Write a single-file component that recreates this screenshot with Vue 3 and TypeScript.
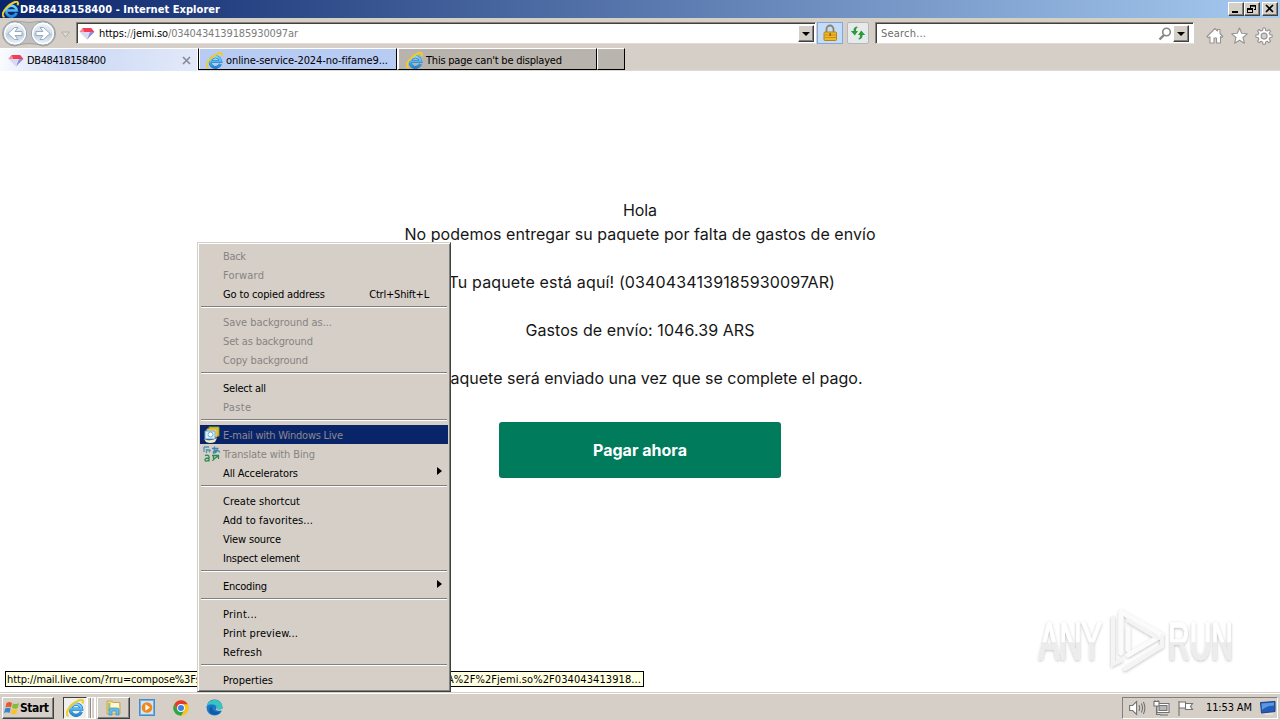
<script setup lang="ts">
interface MenuItem {
  label: string
  w: number
  off?: boolean
  active?: boolean
  sub?: boolean
  key?: string
  icon?: string
}

const groups: MenuItem[][] = [
  [
    { label: 'Back', w: 23, off: true },
    { label: 'Forward', w: 41, off: true },
    { label: 'Go to copied address', w: 102, key: 'Ctrl+Shift+L' },
  ],
  [
    { label: 'Save background as...', w: 109, off: true },
    { label: 'Set as background', w: 90, off: true },
    { label: 'Copy background', w: 85, off: true },
  ],
  [
    { label: 'Select all', w: 43 },
    { label: 'Paste', w: 28, off: true },
  ],
  [
    { label: 'E-mail with Windows Live', w: 120, off: true, active: true, icon: 'mail' },
    { label: 'Translate with Bing', w: 92, off: true, icon: 'bing' },
    { label: 'All Accelerators', w: 75, sub: true },
  ],
  [
    { label: 'Create shortcut', w: 77 },
    { label: 'Add to favorites...', w: 90 },
    { label: 'View source', w: 58 },
    { label: 'Inspect element', w: 77 },
  ],
  [{ label: 'Encoding', w: 44, sub: true }],
  [
    { label: 'Print...', w: 34 },
    { label: 'Print preview...', w: 75 },
    { label: 'Refresh', w: 39 },
  ],
  [{ label: 'Properties', w: 50 }],
]

/* Tracks an element's text so that it fills the given width. */
const vFit = {
  mounted(el: HTMLElement, binding: { value: number }) {
    const n = (el.textContent || '').length
    if (n < 2) return
    const natural = el.getBoundingClientRect().width
    el.style.letterSpacing = `${(binding.value - natural) / (n - 1)}px`
  },
}
</script>

<template>
  <div class="screen">
    <svg class="defs" width="0" height="0">
      <defs>
        <linearGradient id="ieBlue" x1="0" y1="0" x2="0" y2="1">
          <stop offset="0" stop-color="#7ad8fc" /><stop offset="1" stop-color="#2389d8" />
        </linearGradient>
        <linearGradient id="ball" x1="0" y1="0" x2="0" y2="1">
          <stop offset="0" stop-color="#f3f6f9" /><stop offset=".48" stop-color="#d3dde7" />
          <stop offset=".52" stop-color="#b9cbdc" /><stop offset="1" stop-color="#f2f9fd" />
        </linearGradient>
        <symbol id="ie" viewBox="0 0 16 16">
          <path d="M13.600 11.300A5 5 0 1 1 13.900 9H5" fill="none" stroke="#1c78c6" stroke-width="2.900" />
          <path d="M13.600 11.300A5 5 0 1 1 13.900 9H5" fill="none" stroke="url(#ieBlue)" stroke-width="1.900" />
          <path d="M2.500 14.900C-.9 14.800.9 9.500 4.500 6 8.500 2 14.500-.9 15 1.800q.2 1-.5 2.200" fill="none" stroke="#f0cc2e" stroke-width="1.900" />
        </symbol>
        <symbol id="gem" viewBox="0 0 16 14">
          <path d="M3.500 1h9L16 5.500H0z" fill="#ee3f56" /><path d="M3.500 1 5 5.500H0z" fill="#f78995" />
          <path d="M0 5.500h16L8 13.500z" fill="#d4d9f5" /><path d="M11 5.500h5l-8 8z" fill="#8b90dc" /><path d="M5 5.500h6l-3 8z" fill="#e0d8f0" />
        </symbol>
      </defs>
    </svg>

    <header class="title">
      <svg class="t-ico" width="17" height="17"><use href="#ie" /></svg>
      <b v-fit="200">DB48418158400 - Internet Explorer</b>
      <div class="wbtns">
        <i><svg width="12" height="10"><path d="M2 8h6" stroke="#000" stroke-width="2" /></svg></i>
        <i><svg width="12" height="10"><path d="M4 1.500h6M4.500 1v3M9.500 1v5M8 5.500h2M1 4.500h6M1.500 4v5M6.500 4v5M1 8.500h6M1 5.500h6M4 2.200h6" stroke="#000" fill="none" /></svg></i>
        <i class="gap"><svg width="12" height="10"><path d="m2 1 7 7M9 1 2 8" stroke="#000" stroke-width="1.700" /></svg></i>
      </div>
    </header>

    <nav class="bar">
      <svg class="navs" width="76" height="30">
        <path d="M15 3Q29 6 43 3a12.500 12.500 0 0 1 0 25Q29 23 15 28a12.500 12.500 0 0 1 0-25z" fill="#c2c0be" stroke="#a3a09d" />
        <g v-for="x in [15, 43]" :key="x">
          <circle :cx="x" cy="15.500" r="11.500" fill="url(#ball)" stroke="#8d9aa8" />
          <circle :cx="x" cy="15.500" r="10.300" fill="none" stroke="#fbfdff" stroke-width="1.500" />
        </g>
        <path d="M22 13.500h-7l3-4h-3.500l-6.500 6 6.500 6H18l-3-4h7z" fill="#fff" stroke="#8fa4ba" stroke-width=".9" />
        <path d="M36 13.500h7l-3-4h3.500l6.500 6-6.500 6H40l3-4h-7z" fill="#fff" stroke="#8fa4ba" stroke-width=".9" />
        <path d="M61.500 14h8l-4 5z" fill="#dedad4" stroke="#b3afa8" />
      </svg>
      <div class="field addr">
        <svg class="a-ico" width="16" height="13"><use href="#gem" /></svg>
        <span v-fit="199" class="url">https:<em>//</em>jemi.so<em>/0340434139185930097ar</em></span>
        <i class="drop"></i>
      </div>
      <div class="lock">
        <svg width="18" height="18"><path d="M5.500 9V5a3.500 3.500 0 0 1 7 0v4" fill="none" stroke="#8c826c" stroke-width="1.800" /><rect x="3" y="8" width="12.500" height="8.500" rx="1" fill="#f0b822" stroke="#b58318" /><path d="M3.500 11h12M3.500 13.500h12" stroke="#c98f16" /><path d="M9.200 9v3" stroke="#8f6410" stroke-width="1.500" /></svg>
      </div>
      <div class="reload">
        <svg width="18" height="18"><path d="M7.500 2.500C5 3 4.500 5 4.500 7H1.800l4 4.500L9 7H7c0-2 .2-3 2-4z" fill="#2b9b3c" /><path d="M10.500 15.500c2.500-.5 3-2.500 3-4.500h2.700l-4-4.500L9 11h2c0 2-.2 3-2 4z" fill="#2b9b3c" /></svg>
      </div>
      <div class="field search">
        <span v-fit="45" class="ph">Search...</span>
        <svg class="mag" width="14" height="14"><circle cx="8.500" cy="5" r="3.800" fill="none" stroke="#858585" stroke-width="1.600" /><path d="m6 8-4.500 4.500" stroke="#858585" stroke-width="2.400" /></svg>
        <i class="drop"></i>
      </div>
      <svg class="tools" width="72" height="20">
        <g fill="#fff" stroke="#949494" stroke-width="1.100" stroke-linejoin="round">
          <path d="M1 10.500 9 2.500l2.500 2.500V3.500H14v4l2.800 3-1.300 1-1-.8V17h-4v-5H8v5H4v-6.300l-1.700 1z" />
          <path d="m33.500 2 2.200 5.300 5.600.5-4.300 3.700 1.400 5.700-4.900-3-4.900 3 1.400-5.700-4.300-3.700 5.600-.5z" />
          <path d="m57 2h2.200l.4 2.300 1.500.7 1.900-1.400 1.600 1.600L63.200 7l.7 1.600 2.200.4v2.200l-2.200.4-.7 1.600 1.400 1.900-1.600 1.600-1.900-1.400-1.500.7-.4 2.300H57l-.4-2.300-1.600-.7-1.900 1.400-1.500-1.600 1.300-1.900-.7-1.600-2.300-.4V9l2.300-.4.7-1.600-1.300-1.900 1.500-1.600L55 5l1.600-.7z" />
          <circle cx="58.100" cy="10.100" r="3" fill="#d5cfc8" />
        </g>
      </svg>
    </nav>

    <div class="tabs">
      <div class="tab on">
        <svg width="16" height="13"><use href="#gem" /></svg><span v-fit="79">DB48418158400</span>
        <svg class="x" width="9" height="9"><path d="m1 1 7 7M8 1 1 8" stroke="#8a8b9a" stroke-width="1.700" /></svg>
      </div>
      <div class="tab blue"><svg width="17" height="17"><use href="#ie" /></svg><span v-fit="162">online-service-2024-no-fifame9...</span></div>
      <div class="tab grey"><svg width="17" height="17"><use href="#ie" /></svg><span v-fit="136">This page can't be displayed</span></div>
      <div class="tab new"></div>
    </div>

    <main class="page">
      <p><span v-fit="34">Hola</span></p>
      <p><span v-fit="471">No podemos entregar su paquete por falta de gastos de envío</span></p>
      <p class="sp"><span v-fit="390">¡Tu paquete está aquí! (0340434139185930097AR)</span></p>
      <p class="sp"><span v-fit="229">Gastos de envío: 1046.39 ARS</span></p>
      <p class="sp"><span v-fit="445">Tu paquete será enviado una vez que se complete el pago.</span></p>
      <button><span v-fit="94">Pagar ahora</span></button>
    </main>

    <svg class="mark" width="230" height="80" viewBox="0 0 230 80">
      <defs>
        <filter id="soft" x="-10%" y="-10%" width="120%" height="130%"><feDropShadow dx="0" dy="1" stdDeviation="1.500" flood-color="#000" flood-opacity=".27" /></filter>
        <linearGradient id="fade" x1="0" y1="0" x2="0" y2="1"><stop offset=".5" stop-color="#fff" /><stop offset=".52" stop-color="#ececec" /><stop offset="1" stop-color="#ededed" /></linearGradient>
      </defs>
      <g filter="url(#soft)">
        <g fill="url(#fade)" font-family="'Liberation Sans Narrow', 'Liberation Sans', sans-serif" font-weight="400" font-size="51" stroke="url(#fade)" stroke-width="1.300">
          <text x="9" y="59" textLength="63" lengthAdjust="spacingAndGlyphs">ANY</text>
          <text x="138" y="59" textLength="65" lengthAdjust="spacingAndGlyphs">RUN</text>
        </g>
        <path d="M91 53V12l41 23-34 20M98 28v22" fill="none" stroke="#fbfbfb" stroke-width="4.500" stroke-linejoin="round" stroke-linecap="round" />
        <path d="M83 18v46l8-4M95 69l37-23V36M98 20l30 18" fill="none" stroke="#f4f4f4" stroke-width="4" stroke-linecap="round" />
      </g>
    </svg>

    <div class="status">
      <span v-fit="194">http://mail.live.com/?rru=compose%3Fs</span>
      <span v-fit="194">A%2F%2Fjemi.so%2F034043413918...</span>
    </div>

    <div class="menu">
      <div v-for="(g, i) in groups" :key="i" class="group">
        <div v-for="m in g" :key="m.label" class="item" :class="{ off: m.off, active: m.active }">
          <span class="ic">
            <svg v-if="m.icon === 'mail'" width="18" height="18"><path d="M6 1h10v9H6z" fill="#f2c63a" stroke="#6ba52f" /><path d="M4 3h10v8H4z" fill="#f8db72" stroke="#dba52b" /><path d="M2 5h10v8H2z" fill="#d9f0fd" stroke="#69a6ce" /><circle cx="7.500" cy="8.500" r="2.500" fill="#fff" stroke="#63a9d8" /><path d="M1 13q6 3 13-1l-2 4q-5 2-9 0z" fill="#efe9bd" /></svg>
            <svg v-if="m.icon === 'bing'" width="18" height="18" fill="none" stroke-width="1.300">
              <path d="M1 2v5M1 2h5M3.500 4v4M3.500 5H7M6 7l1.500-2" stroke="#4a94b8" />
              <path d="M9 3.500h6.500M11.500 1.500q-.5 4 .8 6.500M14.500 4.500q-1 3.500-4 3.500-1-2 2.500-2.500 3.500-.3 3.500 2" stroke="#3d86b0" />
              <path d="M2 10.500q4-1 4 1.500v4.500M6 13q-4-.2-4 2t4 .2" stroke="#2b8a4e" />
              <path d="M9 10.500h3M10.500 10.500v5M9 15.500l6-4.500M12 10.500h3.500V14" stroke="#2b8a4e" />
            </svg>
          </span>
          <span v-fit="m.w" class="lb">{{ m.label }}</span>
          <span v-if="m.key" v-fit="60" class="lb key">{{ m.key }}</span>
          <i v-if="m.sub" class="arr"></i>
        </div>
      </div>
    </div>

    <footer class="task">
      <div class="start">
        <svg width="16" height="16"><path d="M2.500 3q3-2 5.500 0L7 7.500q-2.500-1.500-5.500 0z" fill="#e8592b" /><path d="M9 3.400q3 1.500 6-.4L13.800 8q-3 1.500-5.800-.2z" fill="#86bd35" /><path d="M1.200 8.500q3-1.500 5.500 0L5.600 13q-2.500-1.700-5.600 0z" fill="#3d84cd" /><path d="M7.800 9q3 1.600 5.800 0L12.300 13.700q-3 1.500-5.700-.3z" fill="#f8c42c" /></svg>
        <b v-fit="29">Start</b>
      </div>
      <div class="ietask"><svg width="18" height="18"><use href="#ie" /></svg></div>
      <div class="stack"></div>
      <div class="folder"><svg width="18" height="18"><path d="M2 2h5l1 1.500h7V15H2z" fill="#f0d989" stroke="#c9a84a" /><path d="M6 4h8v5H6z" fill="#fff8d0" /><path d="M3 4h2v8H3z" fill="#9bc57c" /><path d="M4 16v-5q0-2 2-2h6q2 0 2 2v5h-3v-4H7v4z" fill="#66bce9" stroke="#3e91c5" stroke-width=".7" /></svg></div>
      <svg class="app wm" width="16" height="17"><rect x=".5" y=".5" width="15" height="16" fill="#6fb1e6" stroke="#4a8cc6" /><path d="M2 2h12v13H2z" fill="#cfe6f8" /><circle cx="8" cy="8.500" r="5.300" fill="#f58514" /><path d="m6.400 5.300 4.600 3.200-4.600 3.200z" fill="#fff" /></svg>
      <svg class="app ch" width="16" height="16"><circle cx="8" cy="8" r="7.700" fill="#fbc518" /><path d="M1.330 4.150A7.700 7.700 0 0 1 14.670 4.150H8L4.700 9.900z" fill="#e33b2e" /><path d="M1.330 4.150A7.700 7.700 0 0 0 8 15.700L11.300 9.900H4.700z" fill="#2da44e" /><circle cx="8" cy="8" r="3.900" fill="#fff" /><circle cx="8" cy="8" r="3" fill="#3d7fea" /></svg>
      <svg class="app ed" width="17" height="17"><circle cx="8.500" cy="8.500" r="8" fill="#1779cc" /><path d="M.7 7.500C2-1.500 15.500-1 16.500 7.500c.3 3-2.500 4-6 3q1.500-1.500 0-3.200C8 4.500 3 4.500.7 7.500z" fill="#38c5c0" /><path d="M6.500 7.500c-1.500 3 1.500 6.500 8 5-2 3-7 4.500-10 1.500-2-2-1.500-6 2-6.500z" fill="#135a9f" /><path d="M10.300 7.500q1 2-.6 3 1.500 1.500 5 1.100l1 .6q1-.7.9-2.700-3 2-6 .8 1.500-1 0-2.800z" fill="#d5d0c9" /></svg>
      <div class="tray">
        <svg width="66" height="16">
          <g fill="#fff" stroke="#737373" stroke-width="1.100">
            <path d="M.6 5.500h3l4-4v13l-4-4h-3z" /><path d="M10 5q1.500 3 0 6M12.300 3.500q2.500 4.500 0 9M14.400 2q3 6 0 12" fill="none" />
            <path d="M28 3.500h12v9H28zM31 15h8" /><path d="M30 5.500h8v5h-8z" fill="#b7b7b7" /><path d="M25 1.500h5v4.500h-5zM26 0v1.500M29 0v1.500" /><path d="M27.500 6v8.500h4" fill="none" />
            <path d="M50 1v15M50.500 2h6v6h-6M56.500 3.500h7l-2 3 2 3h-7z" />
          </g>
        </svg>
        <span v-fit="46">11:53 AM</span>
        <svg class="desk" width="16" height="14"><path d="M.5 1.500 15 .5v10L1.500 12z" fill="#245cb9" stroke="#1a3f84" /><path d="m1.500 2.500 12.500-1v3Q7 4.500 2 9z" fill="#5b98e2" /><path d="M5 13h8" stroke="#f0f0f0" /></svg>
      </div>
    </footer>
  </div>
</template>

<style>
body { overflow: hidden; background: #fff; }
</style>

<style scoped>
*, ::before { box-sizing: border-box; }
.screen {
  position: relative; width: 1280px; height: 720px; overflow: hidden; display: flex; flex-direction: column; background: #fff;
  font: 11px/14px Tahoma, "DejaVu Sans Condensed", "DejaVu Sans", sans-serif; font-stretch: condensed; color: #000; white-space: nowrap;
}
.defs { position: absolute; }
span, b { display: inline-block; flex: none; }
svg { flex: none; display: block; }
i, em { font-style: normal; }

.title { height: 18px; flex: none; display: flex; align-items: center; padding: 0 2px; color: #fff; background: linear-gradient(90deg, #0a246a, #a6caf0); }
.title b { margin-top: 2px; }
.t-ico { margin-right: 1px; }
.wbtns { margin-left: auto; display: flex; }
.wbtns i, .drop { background: #d4d0c8; border: 1px solid; border-color: #fff #404040 #404040 #fff; box-shadow: inset -1px -1px #808080; }
.wbtns i { width: 16px; height: 14px; padding: 1px; }
.wbtns .gap { margin-left: 2px; }

.bar { height: 30px; flex: none; display: flex; background: #d5cfc8; border-top: 2px solid #d4d0c4; }
.navs { margin-top: -2px; }
.field { height: 22px; margin-top: 2px; display: flex; align-items: center; background: #fff; border: 1px solid; border-color: #8a8378 #fff #e3ddd8 #8a8378; box-shadow: inset 1px 1px #404040; }
.addr { width: 740px; padding: 2px 1px 1px 2px; }
.a-ico { margin-right: 4px; }
.url, .ph { margin-top: 1px; }
.url em { color: #7d7d7d; }
.drop { width: 16px; height: 17px; margin-left: auto; display: flex; }
.drop::before { content: ""; margin: 6px 0 0 3px; border: 4px solid transparent; border-top-color: #000; border-bottom: 0; height: 4px; }
.lock, .reload { height: 22px; margin-top: 2px; border: 1px solid #7fa9dc; display: flex; align-items: center; justify-content: center; }
.lock { width: 26px; margin-left: 1px; background: #c5dcf8; }
.reload { width: 22px; margin-left: 4px; border-color: #b3b7ba; border-radius: 2px; background: #e7eaea; }
.search { width: 319px; margin-left: 6px; padding: 2px 4px 1px 5px; }
.ph { color: #6d6d6d; }
.mag { margin-left: auto; margin-right: 1px; }
.search .drop { margin-left: 0; }
.tools { margin: 6px 0 0 12px; }

.tabs { height: 23px; flex: none; display: flex; background: #d5cfc8; border-bottom: 1px solid #dedad5; }
.tab { height: 22px; display: flex; align-items: center; border: 1px solid; border-color: #fff #000 #000 #fff; padding: 3px 0 0 7px; }
.tab svg { margin-top: -1px; }
.tab.on { width: 198px; height: 23px; padding: 2px 6px 0 8px; border: 0; border-top: 1px solid #fff; border-right: 1px solid #fff; background: linear-gradient(100deg, #fbfcff 0%, #cbd8f5 35%, #e2e9f9 100%); }
.tab.on svg:first-child { margin-right: 3px; }
.tab.on .x { margin: -2px 0 0 auto; }
.tab.blue { width: 199px; background: #b7cbf3; border-left: 1px solid #000; box-shadow: inset 1px 0 #fff; }
.tab.blue svg, .tab.grey svg { margin-right: 3px; }
.tab.grey { width: 200px; padding-left: 7px; border-left-width: 2px; background: #b8b3ad; }
.tab.new { width: 28px; background: #bab4ae; }

.page { flex: 1; padding-top: 127px; text-align: center; font: 16px/24px Inter, sans-serif; color: #161616; }
.page p { margin: 0; height: 24px; }
.page .sp { margin-top: 24px; }
button { display: block; width: 282px; height: 56px; margin: 32px auto 0; padding: 0; border: 0; border-radius: 3px; background: #007c5d; color: #fff; font: 700 16px/56px Inter, sans-serif; }

.mark { position: absolute; left: 1030px; top: 600px; }
.status { position: absolute; left: 5px; top: 671px; width: 639px; height: 16px; padding: 1px 2px 0 1px; border: 1px solid #000; background: #ffffe1; display: flex; justify-content: space-between; }
.status span { line-height: 13px; }

.menu { position: absolute; left: 197px; top: 242px; width: 254px; height: 450px; padding: 3px 2px 1px; background: #d5cfc8; border: 1px solid; border-color: #d4d0c8 #404040 #404040 #d4d0c8; box-shadow: inset 1px 1px #fff, inset -1px -1px #808080; }
.group + .group::before { content: ""; display: block; height: 2px; margin: 0 1px 4px; border-top: 1px solid #808080; border-bottom: 1px solid #fff; }
.group + .group { padding-top: 3px; }
.item { height: 19px; display: flex; align-items: center; }
.ic { width: 23px; height: 18px; padding-left: 3px; }
.lb { margin-top: 2px; }
.off { color: #878380; }
.active { background: #0a246a; color: #8a8a8a; }
.key { margin-left: auto; margin-right: 19px; }
.arr { margin-left: auto; margin-right: 6px; margin-top: -4px; border: 4px solid transparent; border-left: 5px solid #000; border-right: 0; }

.task { height: 28px; flex: none; display: flex; align-items: center; background: #d5cfc8; border-top: 1px solid #d4d0c8; box-shadow: inset 0 1px #fff; padding: 2px 2px 0; }
.start, .folder { background: #d5cfc8; border: 1px solid; border-color: #fff #404040 #404040 #fff; box-shadow: inset -1px -1px #808080; display: flex; align-items: center; height: 22px; }
.start { width: 52px; padding-left: 1px; }
.start b { font-size: 12px; margin-left: 0; }
.ietask { width: 24px; height: 22px; margin-left: 9px; padding: 1px 2px; border: 1px solid; border-color: #404040 #fff #fff #404040; background: #f1efec; }
.stack { width: 9px; height: 22px; border: solid #fff; border-width: 1px 2px 1px 1px; background: linear-gradient(90deg, #d5cfc8 2px, #8e8a84 2px 3px, #fff 3px 4px, #d5cfc8 4px); }
.folder { width: 33px; margin-left: 1px; padding-left: 7px; }
.app.wm { margin-left: 9px; }
.app.ch { margin-left: 18px; }
.app.ed { margin-left: 17px; }
.tray { margin-left: auto; width: 156px; height: 22px; display: flex; align-items: center; padding: 0 1px 0 6px; border: 1px solid; border-color: #808080 #fff #fff #808080; }
.tray span { margin-left: 11px; }
.desk { margin-left: auto; }
</style>
